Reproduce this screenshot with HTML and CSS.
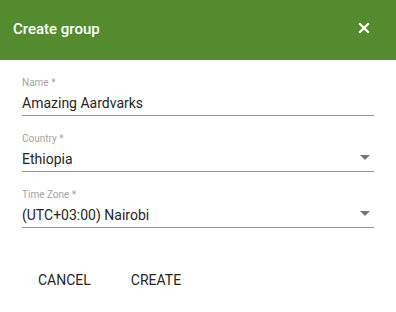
FILE: index.html
```html
<!DOCTYPE html>
<html>
<head>
<meta charset="utf-8">
<link rel="stylesheet" href="styles.css">
</head>
<body>
<div class="dialog">
  <header class="header">
    <span class="title">Create group</span>
    <span class="close" aria-label="Close">
      <svg width="12" height="12" viewBox="0 0 12 12"><path d="M1.2 1.2L10.8 10.8M10.8 1.2L1.2 10.8" stroke="#fff" stroke-width="2.2" fill="none"/></svg>
    </span>
  </header>
  <div class="content">
    <div class="field">
      <div class="label">Name *</div>
      <div class="value">Amazing Aardvarks</div>
    </div>
    <div class="field select">
      <div class="label">Country *</div>
      <div class="value">Ethiopia</div>
      <span class="arrow"></span>
    </div>
    <div class="field select">
      <div class="label">Time Zone *</div>
      <div class="value">(UTC+03:00) Nairobi</div>
      <span class="arrow"></span>
    </div>
  </div>
  <div class="actions">
    <button class="btn">CANCEL</button>
    <button class="btn">CREATE</button>
  </div>
</div>
</body>
</html>
```

FILE: styles.css
```css
html, body {
  margin: 0;
  padding: 0;
  background: #fff;
}
body {
  font-family: Roboto, "Liberation Sans", Arial, sans-serif;
  width: 396px;
  height: 312px;
  overflow: hidden;
}
.dialog {
  display: flex;
  flex-direction: column;
}
.header {
  height: 60px;
  background: #558b2f;
  display: flex;
  align-items: center;
  justify-content: space-between;
  padding: 0 26px 0 13px;
}
.title {
  color: #fff;
  font-size: 15px;
  font-weight: 500;
  line-height: 20px;
  margin-top: -2px;
}
.close {
  display: flex;
  width: 12px;
  height: 12px;
  margin-top: -4px;
}
.content {
  padding: 16px 22px 0 22px;
  display: flex;
  flex-direction: column;
  gap: 16px;
}
.field {
  position: relative;
  border-bottom: 1px solid #949494;
  padding-bottom: 2px;
}
.label {
  font-size: 10px;
  line-height: 13px;
  color: #a3a3a3;
  margin-bottom: 4px;
}
.value {
  font-size: 14px;
  line-height: 20px;
  color: #262626;
}
.arrow {
  position: absolute;
  right: 4px;
  bottom: 11px;
  width: 0;
  height: 0;
  border-left: 5px solid transparent;
  border-right: 5px solid transparent;
  border-top: 5px solid #757575;
}
.actions {
  display: flex;
  gap: 8px;
  padding: 34px 0 0 22px;
}
.btn {
  font-family: Roboto, "Liberation Sans", Arial, sans-serif;
  font-size: 14px;
  font-weight: 400;
  color: #262626;
  background: none;
  border: none;
  padding: 0 16px;
  height: 36px;
  line-height: 36px;
  min-width: 64px;
}
```
